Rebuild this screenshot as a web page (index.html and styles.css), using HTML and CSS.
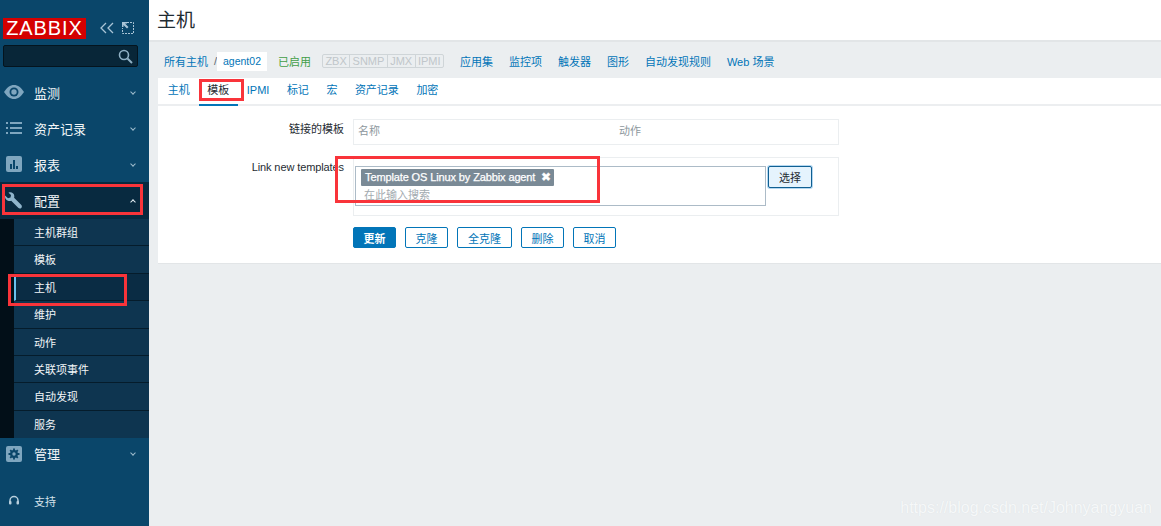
FILE: index.html
```html
<!DOCTYPE html>
<html lang="zh">
<head>
<meta charset="utf-8">
<title>主机</title>
<link rel="stylesheet" href="styles.css">
</head>
<body>
<div class="app">
  <aside class="sidebar">
    <div class="brand">
      <span class="logo">ZABBIX</span>
      <svg class="brand-icon" width="14" height="12" viewBox="0 0 14 12"><path d="M6 1 1 6l5 5M13 1 8 6l5 5" fill="none" stroke="#a9c4d6" stroke-width="1.3"/></svg>
      <svg class="brand-icon" width="12" height="12" viewBox="0 0 12 12"><path d="M5 .5h6.500v11H.5V6" fill="none" stroke="#a9c4d6" stroke-dasharray="2 1"/><path d="M0 0h5v1.500H3L6.500 5 5 6.500 1.500 3v2H0z" fill="#a9c4d6"/></svg>
    </div>
    <div class="search">
      <svg width="15" height="15" viewBox="0 0 15 15"><circle cx="6" cy="6" r="4.500" fill="none" stroke="#8fb0c4" stroke-width="1.600"/><path d="m9.500 9.500 4.500 4.500" stroke="#8fb0c4" stroke-width="2"/></svg>
    </div>
    <nav class="menu">
      <div class="item">
        <svg class="ico" width="20" height="14" viewBox="0 0 20 14"><path d="M0 7c3-4.500 6-7 10-7s7 2.500 10 7c-3 4.500-6 7-10 7S3 11.500 0 7z" fill="#7fa6bf"/><circle cx="10" cy="7" r="4.500" fill="#0a466a"/><circle cx="10" cy="7" r="2.700" fill="#7fa6bf"/></svg>
        <span>监测</span><i class="chev"></i>
      </div>
      <div class="item">
        <svg class="ico" width="20" height="12" viewBox="0 0 20 12"><path d="M2 0h2v2H2zM2 5h2v2H2zM2 10h2v2H2zM6 0h12v2H6zM6 5h12v2H6zM6 10h12v2H6z" fill="#7fa6bf"/></svg>
        <span>资产记录</span><i class="chev"></i>
      </div>
      <div class="item">
        <svg class="ico" width="20" height="16" viewBox="0 0 20 16"><rect x="2" width="16" height="16" rx="2" fill="#7fa6bf"/><path d="M6 8h2v5H6zM9 4h2v9H9zM12 10h2v3h-2z" fill="#0a466a"/></svg>
        <span>报表</span><i class="chev"></i>
      </div>
      <div class="item open">
        <svg class="ico" width="20" height="18" viewBox="0 0 20 18"><path d="M1 3.500 4 6.300 6.500 5.500 7 3 4.500.7C7-.3 10 1 10.300 4c0 .7 0 1.200-.2 1.700l7 7c1 1 1 2.300.2 3.200-.9.900-2.200.8-3.100-.1l-7-7C4 9.700 .5 7.500 1 3.500z" fill="#8fb5cc"/></svg>
        <span>配置</span><i class="chev up"></i>
      </div>
      <ul class="submenu">
        <li>主机群组</li>
        <li>模板</li>
        <li class="selected">主机</li>
        <li>维护</li>
        <li>动作</li>
        <li>关联项事件</li>
        <li>自动发现</li>
        <li>服务</li>
      </ul>
      <div class="item last">
        <svg class="ico" width="20" height="16" viewBox="0 0 20 16"><rect x="2" width="16" height="16" rx="2" fill="#7fa6bf"/><path d="M10 2.500v11M4.500 8h11M6.200 4.200l7.600 7.600M13.800 4.200l-7.600 7.600" stroke="#0a466a" stroke-width="1.800"/><circle cx="10" cy="8" r="3.900" fill="#0a466a"/><circle cx="10" cy="8" r="1.700" fill="#7fa6bf"/></svg>
        <span>管理</span><i class="chev"></i>
      </div>
    </nav>
    <div class="support">
      <svg class="ico-small" width="12" height="12" viewBox="0 0 12 12"><path d="M2 8V5.500a4 4 0 0 1 8 0V8" fill="none" stroke="#b9d0de" stroke-width="1.500"/><rect x="1" y="6" width="2.500" height="3.500" rx="1" fill="#b9d0de"/><rect x="8.500" y="6" width="2.500" height="3.500" rx="1" fill="#b9d0de"/></svg>
      <span>支持</span>
    </div>
  </aside>

  <main class="main">
    <header class="page-head"><h1>主机</h1></header>
    <div class="crumbs">
      <a>所有主机</a><span class="sep">/</span><span class="current">agent02</span>
      <span class="enabled">已启用</span>
      <span class="badges"><b>ZBX</b><b>SNMP</b><b>JMX</b><b>IPMI</b></span>
      <div class="links">
        <a>应用集</a><a>监控项</a><a>触发器</a><a>图形</a><a>自动发现规则</a><a>Web 场景</a>
      </div>
    </div>
    <section class="panel">
      <div class="tabs">
        <a>主机</a><a class="active">模板</a><a>IPMI</a><a>标记</a><a>宏</a><a>资产记录</a><a>加密</a>
      </div>
      <div class="form">
        <div class="row row-linked">
          <label>链接的模板</label>
          <div class="box box-linked"><span class="col-name">名称</span><span>动作</span></div>
        </div>
        <div class="row row-new">
          <label class="label-tight">Link new templates</label>
          <div class="box box-new">
            <div class="multiselect">
              <span class="tag">Template OS Linux by Zabbix agent<em>✖</em></span>
              <span class="placeholder">在此输入搜索</span>
            </div>
            <button class="choose" type="button">选择</button>
          </div>
        </div>
        <div class="actions">
          <button class="btn primary" type="button">更新</button>
          <button class="btn" type="button">克隆</button>
          <button class="btn wide" type="button">全克隆</button>
          <button class="btn" type="button">删除</button>
          <button class="btn" type="button">取消</button>
        </div>
      </div>
    </section>
    <div class="watermark">https://blog.csdn.net/Johnyangyuan</div>
  </main>

  <div class="mark mark-config"></div>
  <div class="mark mark-host"></div>
  <div class="mark mark-tab"></div>
  <div class="mark mark-select"></div>
</div>
</body>
</html>
```
FILE: styles.css
```css
* { box-sizing: border-box; }
html, body { margin: 0; height: 100%; }
body {
  font-family: "Liberation Sans", Arial, "Noto Sans CJK SC", sans-serif;
  font-size: 11px;
  color: #1f2c33;
  overflow: hidden;
}
.app { position: relative; display: flex; width: 1161px; height: 526px; overflow: hidden; }

/* Sidebar */
.sidebar { width: 149px; flex: none; background: #0a466a; display: flex; flex-direction: column; color: #f2f6f8; }
.brand { display: flex; align-items: center; height: 45px; padding: 11px 0 0 3px; }
.logo {
  width: 83px; height: 21px; background: #d40000; color: #fff;
  font-size: 20px; line-height: 21px; letter-spacing: .9px; text-align: center; margin-right: 14px;
}
.brand-icon { margin-right: 8px; }
.search {
  width: 135px; height: 22px; margin-left: 3px;
  background: #082638; border: 1px solid #04141e; border-radius: 2px;
  display: flex; align-items: center; justify-content: flex-end; padding-right: 4px;
}
.menu { margin-top: 7px; }
.item { display: flex; align-items: center; height: 36px; padding-left: 4px; font-size: 13px; }
.item span { margin-left: 10px; flex: 1; }
.ico { flex: none; }
.item.open { background: #082a40; height: 37px; }
.item.last { padding-bottom: 5px; }
.chev {
  width: 4px; height: 4px; margin-right: 14px; margin-top: -1px;
  border-right: 1px solid #9fbccd; border-bottom: 1px solid #9fbccd; transform: rotate(45deg);
}
.chev.up { transform: rotate(225deg); margin-top: 3px; border-color: #e3edf3; }
.submenu { list-style: none; margin: 0; padding: 0 0 0 14px; background: #020f18; }
.submenu li {
  height: 27.400px; line-height: 28.500px; padding-left: 20px; font-size: 11px;
  background: #0e3550; border-bottom: 1px solid #051c2b;
}
.submenu li:last-child { border-bottom: 0; }
.submenu .selected { background: #0a2c44; border-left: 2px solid #69c0ee; padding-left: 18px; }
.support { display: flex; align-items: center; margin-top: 19px; padding-left: 8px; font-size: 11px; color: #d5e2ea; }
.support span { margin-left: 14px; }

/* Main */
.main { position: relative; flex: 1; background: #ebeef0; min-width: 0; }
.page-head { height: 42px; background: #fff; border-bottom: 2px solid #e2e5e7; padding: 9px 0 0 8px; }
.page-head h1 { margin: 0; font-size: 19px; line-height: 24px; font-weight: 400; color: #1f2c33; }
.crumbs { display: flex; align-items: center; height: 36px; padding: 2px 0 0 15px; color: #0275b8; }
.sep { margin: 0 0 0 6px; color: #5b6870; width: 3px; }
.current { background: #fff; color: #0275b8; height: 19px; line-height: 19px; font-size: 10.500px; width: 50px; text-align: center; }
.enabled { color: #429e47; margin-left: 11px; }
.badges { display: flex; margin-left: 11px; border: 1px solid #cfd5d8; border-radius: 2px; color: #c0c6ca; height: 14px; line-height: 12px; }
.badges b { font-weight: 400; padding: 0 2.400px; border-left: 1px solid #cfd5d8; }
.badges b:first-child { border-left: 0; }
.links { display: flex; margin-left: 16px; gap: 16px; }
.panel { margin-left: 9px; background: #fff; height: 186px; border-bottom: 1px solid #e2e5e7; }
.tabs { display: flex; height: 28px; padding: 0 0 0 1px; border-bottom: 2px solid #eceef0; color: #0275b8; }
.tabs a { padding: 0 8.750px; height: 28px; line-height: 24px; }
.tabs a.active { color: #1f2c33; border-bottom: 2px solid #0275b8; }
.form { padding-top: 13px; }
.row { display: flex; }
label { width: 186px; text-align: right; margin-right: 9px; line-height: 20px; flex: none; }
.label-tight { letter-spacing: -.1px; }
.box { width: 486px; border: 1px solid #ebeef0; }
.box-linked { height: 26px; line-height: 22px; padding-left: 4px; color: #8d979d; display: flex; }
.col-name { width: 261px; }
.row-new { margin-top: 12px; }
.box-new { height: 59px; display: flex; padding: 8px 0 0 1px; align-items: flex-start; }
.multiselect { width: 411px; height: 40px; border: 1px solid #acbbc7; padding: 2px 0 0 5px; display: flex; flex-direction: column; align-items: flex-start; }
.tag {
  height: 17px; line-height: 17px; background: #7a8a96; color: #fff; padding: 0 3px 0 4px; border-radius: 1px;
  white-space: nowrap; letter-spacing: -.12px; -webkit-text-stroke: .25px #fff;
}
.tag em { font-style: normal; margin-left: 6px; font-size: 12px; }
.placeholder { color: #a3abb0; margin: 1px 0 0 3px; line-height: 16px; }
.choose {
  width: 44px; height: 22px; margin-left: 2px; padding: 0; font: inherit; color: #1f2c33;
  background: #e5f3fd; border: 1px solid #0f5f92; border-radius: 2px; box-shadow: 0 0 0 1px #b4d7f0;
}
.actions { display: flex; gap: 9px; margin: 11px 0 0 195px; }
.btn {
  height: 21px; min-width: 43px; padding: 0 8px; font: inherit; color: #0275b8; background: #fff;
  border: 1px solid #0275b8; border-radius: 2px;
}
.btn.wide { min-width: 55px; }
.btn.primary { background: #0275b8; color: #fff; font-weight: 700; }
.watermark { position: absolute; right: 9px; bottom: 9px; font-size: 16px; color: #f6f8f9; text-shadow: 0 0 1px #d9dee1; }

/* Red annotation rectangles drawn over the screenshot */
.mark { position: absolute; border: 3px solid #f9343a; pointer-events: none; }
.mark-config { left: 2px; top: 184px; width: 141px; height: 31px; }
.mark-host { left: 8px; top: 274px; width: 119px; height: 32px; }
.mark-tab { left: 199px; top: 79px; width: 45px; height: 22px; }
.mark-select { left: 335px; top: 156px; width: 265px; height: 47px; }
```
